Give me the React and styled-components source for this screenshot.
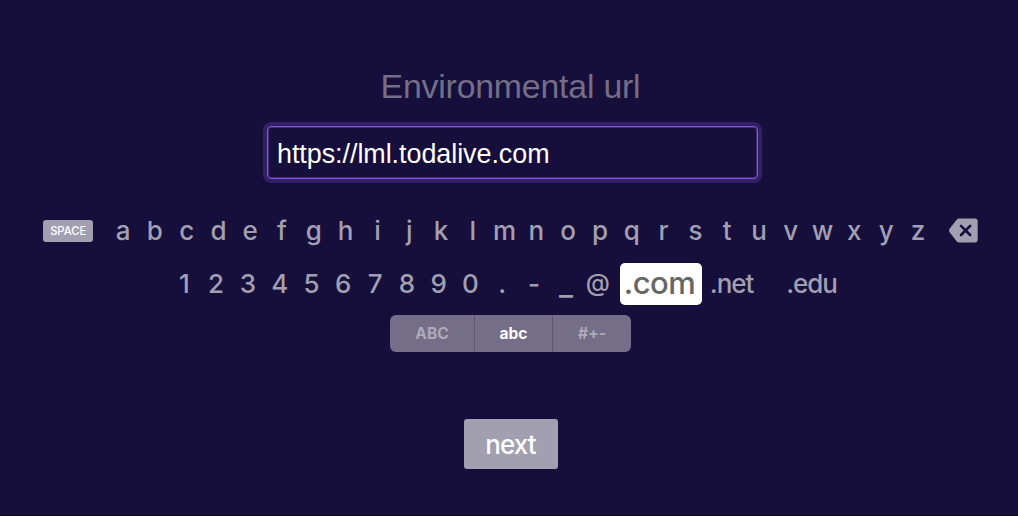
import React from 'react';
import styled, { createGlobalStyle } from 'styled-components';

const GlobalStyle = createGlobalStyle`
  * {
    box-sizing: border-box;
  }

  body {
    margin: 0;
    background: #160f3b;
  }
`;

const Container = styled.main`
  display: flex;
  flex-direction: column;
  align-items: center;
  width: 1018px;
  height: 516px;
  padding: 66px 0 0 3px;
  overflow: hidden;
  background: #160f3b;
  border-bottom: 1px solid #0d0828;
  font-family: Inter, sans-serif;
`;

const Title = styled.h1`
  height: 40px;
  margin: 0;
  color: #746e89;
  font-family: 'Liberation Sans', Arial, sans-serif;
  font-size: 33.8px;
  font-weight: 400;
  letter-spacing: -0.18px;
  line-height: 40px;
`;

const UrlInput = styled.input`
  width: 491px;
  height: 53px;
  margin: 20px 0 0 4px;
  padding: 4px 9px 0;
  border: 1px solid #8353dc;
  border-radius: 4px;
  outline: none;
  background: #160f3b;
  box-shadow: 0 0 0 4px #312063, inset 0 0 0 1px #442b7e;
  color: #fff;
  font-family: 'Liberation Sans', Arial, sans-serif;
  font-size: 26.9px;
  letter-spacing: -0.04px;
`;

const KeyRow = styled.div`
  display: flex;
  align-items: center;
  height: ${props => props.height}px;
  margin-top: ${props => props.gap}px;
  margin-left: ${props => props.indent || 0}px;
`;

const Key = styled.button`
  width: ${props => props.width || 31.8}px;
  height: 40px;
  padding: 0 0 ${props => props.lift || 0}px;
  border: none;
  background: none;
  color: #a29fb1;
  font-family: inherit;
  font-size: ${props => props.size || 26}px;
  font-weight: 450;
  line-height: ${props => 40 - (props.lift || 0)}px;
  text-align: center;
  white-space: nowrap;
`;

const DomainKey = styled(Key)`
  padding-right: 1px;
  letter-spacing: -1px;
`;

const FocusedKey = styled(Key)`
  height: 42px;
  margin: 0 -1px 0 6px;
  padding: 0 2px 3px 0;
  border-radius: 5px;
  background: #fff;
  color: #666;
  font-size: 31px;
  letter-spacing: -0.5px;
`;

const SpaceKey = styled.button`
  width: 50px;
  height: 22px;
  margin: -1px 14px 0 0;
  padding: 0;
  border: none;
  border-radius: 3px;
  background: #a29fb1;
  color: #fff;
  font-family: inherit;
  font-size: 11.2px;
  font-weight: 450;
  line-height: 22px;
`;

const DeleteKey = styled.button`
  display: flex;
  margin: -2px 0 0 15px;
  padding: 0;
  border: none;
  background: none;
`;

const ModeSwitch = styled.div`
  display: flex;
  width: 241px;
  height: 37px;
  margin-top: 10px;
  overflow: hidden;
  border-radius: 6px;
  background: #746e89;
`;

const Mode = styled.button`
  width: ${props => props.width}px;
  padding: 0 0 1px;
  border: none;
  border-left: ${props => (props.divided ? '1px solid #5b5670' : 'none')};
  background: none;
  color: ${props => (props.active ? '#fff' : '#aeabba')};
  font-family: inherit;
  font-size: 15.5px;
  font-weight: 700;
`;

const NextButton = styled.button`
  width: 94px;
  height: 50px;
  margin-top: 67px;
  padding: 1px 0 0;
  border: none;
  border-radius: 3px;
  background: #a29fb1;
  color: #fff;
  font-family: inherit;
  font-size: 26px;
  font-weight: 450;
  letter-spacing: -0.9px;
  line-height: 50px;
`;

const letters = 'abcdefghijklmnopqrstuvwxyz'.split('');
const symbols = '1234567890.-_@'.split('');

// glyphs that sit off the common size or baseline
const adjust = {
  _: { size: 30 },
  '@': { size: 24.5, lift: 4 },
};

const DeleteIcon = () => (
  <svg width="29" height="25" viewBox="0 0 29 25">
    <path
      d="M10.2 0.4H25.7Q28.7 0.4 28.7 3.4V21.6Q28.7 24.6 25.7 24.6H10.2Q8.8 24.6 7.8 23.5L0.8 14.6Q-0.7 12.5 0.8 10.4L7.8 1.5Q8.8 0.4 10.2 0.4Z"
      fill="#a29fb1"
    />
    <path d="M12 7.8L21.2 17M21.2 7.8L12 17" stroke="#160f3b" strokeWidth="2.6" strokeLinecap="round" />
  </svg>
);

const App = () => {
  const [url, setUrl] = React.useState('https://lml.todalive.com');
  const [mode, setMode] = React.useState('abc');

  const type = text => setUrl(prev => prev + text);

  return (
    <>
      <GlobalStyle />
      <Container>
        <Title>Environmental url</Title>
        <UrlInput value={url} onChange={e => setUrl(e.target.value)} />

        <KeyRow height={40} gap={32}>
          <SpaceKey onClick={() => type(' ')}>SPACE</SpaceKey>
          {letters.map(letter => (
            <Key key={letter} onClick={() => type(letter)}>{letter}</Key>
          ))}
          <DeleteKey aria-label="delete" onClick={() => setUrl(prev => prev.slice(0, -1))}>
            <DeleteIcon />
          </DeleteKey>
        </KeyRow>

        <KeyRow height={42} gap={12} indent={8}>
          {symbols.map(symbol => (
            <Key key={symbol} {...adjust[symbol]} onClick={() => type(symbol)}>
              {symbol}
            </Key>
          ))}
          <FocusedKey width={82} onClick={() => type('.com')}>.com</FocusedKey>
          <DomainKey width={63} onClick={() => type('.net')}>.net</DomainKey>
          <DomainKey width={97} onClick={() => type('.edu')}>.edu</DomainKey>
        </KeyRow>

        <ModeSwitch>
          <Mode width={84} active={mode === 'ABC'} onClick={() => setMode('ABC')}>ABC</Mode>
          <Mode width={78} divided active={mode === 'abc'} onClick={() => setMode('abc')}>abc</Mode>
          <Mode width={79} divided active={mode === '#+-'} onClick={() => setMode('#+-')}>#+-</Mode>
        </ModeSwitch>

        <NextButton>next</NextButton>
      </Container>
    </>
  );
};

export default App;
